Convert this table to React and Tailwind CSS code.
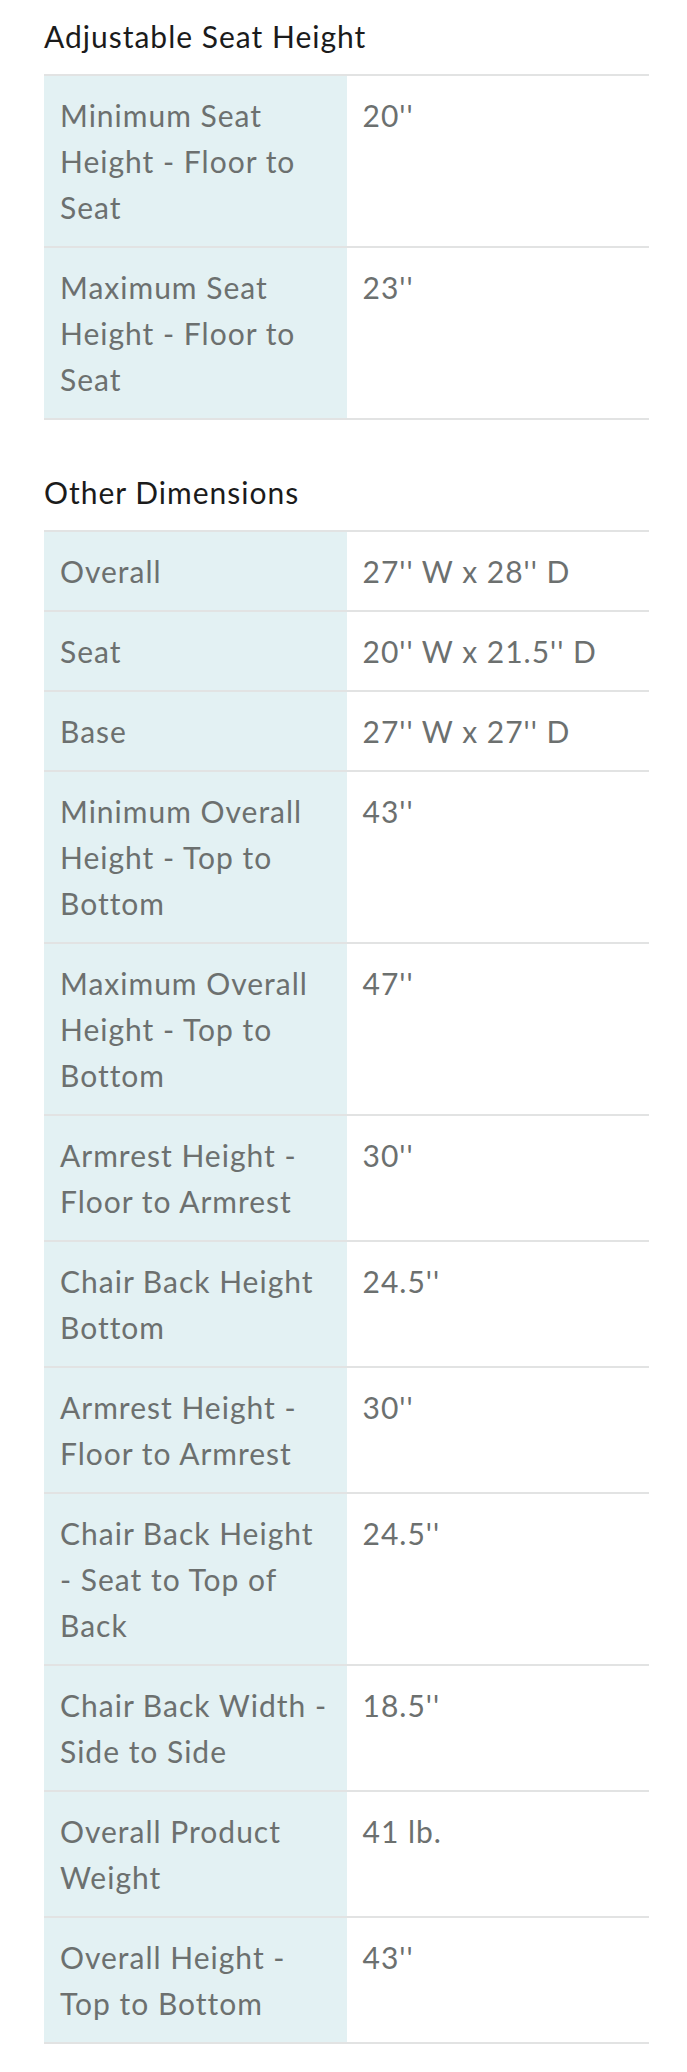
export default function App() {
  const seat = [
    ["Minimum Seat Height - Floor to Seat", "20''"],
    ["Maximum Seat Height - Floor to Seat", "23''"],
  ];
  const other = [
    ["Overall", "27'' W x 28'' D"],
    ["Seat", "20'' W x 21.5'' D"],
    ["Base", "27'' W x 27'' D"],
    ["Minimum Overall Height - Top to Bottom", "43''"],
    ["Maximum Overall Height - Top to Bottom", "47''"],
    ["Armrest Height - Floor to Armrest", "30''"],
    ["Chair Back Height Bottom", "24.5''"],
    ["Armrest Height - Floor to Armrest", "30''"],
    ["Chair Back Height - Seat to Top of Back", "24.5''"],
    ["Chair Back Width\u00A0- Side to Side", "18.5''"],
    ["Overall Product Weight", "41 lb."],
    ["Overall Height - Top to Bottom", "43''"],
  ];
  const Table = ({ rows }) => (
    <div className="border-t-2 border-[#e2e3e3]">
      {rows.map(([k, v], i) => (
        <div key={i} className="grid grid-cols-2 border-b-2 border-[#e2e3e3]">
          <div className="bg-[#e3f1f3] px-[16px] py-[16px] text-[#6c706f]">{k}</div>
          <div className="px-[16px] py-[16px] text-[#6c706f]">{v}</div>
        </div>
      ))}
    </div>
  );
  return (
    <div
      className="min-h-[2072px] bg-white pl-[44px] pr-[38px] pt-[16px] text-[30px] leading-[46px] tracking-[1px]"
      style={{ fontFamily: "Lato, 'Noto Sans', sans-serif" }}
    >
      <h2 className="mb-[18px] text-[30px] leading-[40px] text-[#1b1b1b]">Adjustable Seat Height</h2>
      <Table rows={seat} />
      <h2 className="mb-[18px] mt-[52px] text-[30px] leading-[40px] text-[#1b1b1b]">Other Dimensions</h2>
      <Table rows={other} />
    </div>
  );
}
